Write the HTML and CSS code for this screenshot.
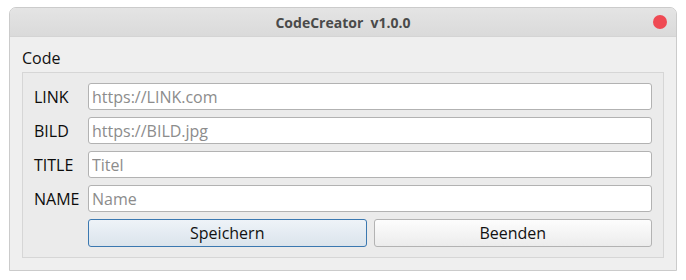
FILE: index.html
```html
<!DOCTYPE html>
<html lang="de">
<head>
    <meta charset="UTF-8">
    <title>CodeCreator v1.0.0</title>
    <link rel="stylesheet" href="styles.css">
</head>
<body>

    <div class="window">
        <div class="titlebar">
            <span class="title">CodeCreator&nbsp;&nbsp;v1.0.0</span>
            <span class="close"></span>
        </div>

        <div class="content">
            <div class="group-title">Code</div>
            <div class="group">
                <label for="link">LINK</label>
                <input type="text" id="link" placeholder="https://LINK.com">

                <label for="bild">BILD</label>
                <input type="text" id="bild" placeholder="https://BILD.jpg">

                <label for="title">TITLE</label>
                <input type="text" id="title" placeholder="Titel">

                <label for="name">NAME</label>
                <input type="text" id="name" placeholder="Name">

                <div class="buttons">
                    <button class="btn btn-default">Speichern</button>
                    <button class="btn">Beenden</button>
                </div>
            </div>
        </div>
    </div>

</body>
</html>
```

FILE: styles.css
```css
/* Page */
body {
    margin: 0;
    background: #ffffff;
    font-family: "Open Sans", "Noto Sans", sans-serif;
    color: #1c1c1c;
}

.window {
    margin: 7px 9px;
    width: 666px;
    height: 262px;
    border: 1px solid #cbcbcb;
    border-radius: 7px 7px 0 0;
    background: #efefef;
    display: flex;
    flex-direction: column;
    overflow: hidden;
}

/* Title bar */
.titlebar {
    height: 28px;
    background: linear-gradient(#e4e4e4, #dadada);
    border-bottom: 1px solid #d4d4d4;
    display: flex;
    align-items: center;
    justify-content: center;
    position: relative;
}

.title {
    font-size: 14px;
    font-weight: bold;
    color: #4a4a4a;
}

.close {
    position: absolute;
    right: 9px;
    top: 7px;
    width: 14px;
    height: 14px;
    border-radius: 50%;
    background: #ef4a54;
}

/* Content */
.content {
    padding: 10px 12px 12px 12px;
}

.group-title {
    font-size: 16px;
    height: 25px;
    line-height: 22px;
    color: #111;
}

.group {
    border: 1px solid #d6d6d6;
    background: #ebebeb;
    padding: 10px 11px 10px 11px;
    display: grid;
    grid-template-columns: 48px 1fr;
    column-gap: 6px;
    row-gap: 7px;
    align-items: center;
}

label {
    font-size: 16px;
    color: #0c0c0c;
}

input {
    height: 25px;
    margin: 0;
    padding: 0 3px;
    border: 1px solid #b2b2b2;
    border-radius: 3px;
    background: #ffffff;
    font-family: inherit;
    font-size: 16px;
    color: #222;
}

input::placeholder {
    color: #8c8c8c;
}

.buttons {
    grid-column: 2;
    display: flex;
    gap: 7px;
}

.btn {
    flex: 1;
    height: 28px;
    border: 1px solid #b3b3b3;
    border-radius: 3px;
    background: linear-gradient(#fdfdfd, #ececec);
    font-family: inherit;
    font-size: 16px;
    color: #111;
    padding: 0;
}

.btn-default {
    border-color: #3b78b0;
    background: linear-gradient(#eef3f8, #dbe4ec);
}
```
